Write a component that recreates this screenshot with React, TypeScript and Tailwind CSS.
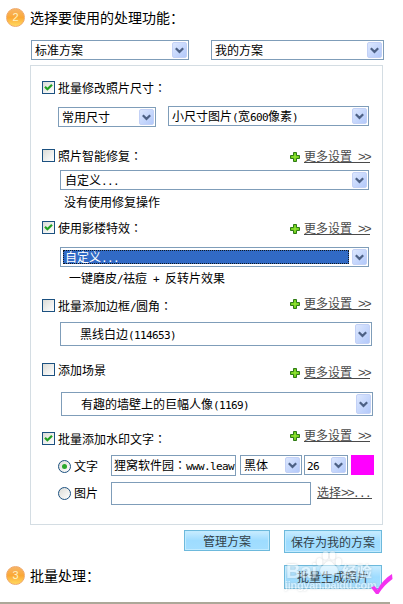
import React from 'react';
import clsx from 'clsx';

const Arrow: React.FC = () => (
  <span className="flex w-[15px] shrink-0 self-stretch items-center justify-center rounded-[2px] border border-[#c3d1f6] bg-linear-to-br from-[#dce7fe] to-[#b3c9fa]">
    <svg width="9" height="7" viewBox="0 0 9 7" fill="none" stroke="#4d6185" strokeWidth="2.2">
      <path d="M0.8 1.2 4.5 4.9 8.2 1.2" />
    </svg>
  </span>
);

const Select: React.FC<{ className?: string; children: React.ReactNode; focused?: boolean }> = ({
  className,
  children,
  focused,
}) => (
  <div className={clsx('flex shrink-0 items-center border border-[#7f9db9] bg-white p-px', className)}>
    {focused ? (
      <span className="mx-px mr-[3px] h-[14px] flex-1 border border-dotted border-[#101820] bg-[#316ac5] pl-px leading-[12px] text-white">
        {children}
      </span>
    ) : (
      <span className="h-[14px] flex-1 leading-[14px]">{children}</span>
    )}
    <Arrow />
  </div>
);

const Checkbox: React.FC<{ checked?: boolean }> = ({ checked }) => (
  <span className="flex h-[13px] w-[13px] shrink-0 items-center justify-center border border-[#1c5180] bg-linear-to-br from-[#dcdcd7] to-white">
    {checked && (
      <svg width="9" height="9" viewBox="0 0 9 9" fill="none" stroke="#21a121" strokeWidth="2.2">
        <path d="M1 3.8 3.4 6.3 8 1.7" />
      </svg>
    )}
  </span>
);

const Radio: React.FC<{ checked?: boolean }> = ({ checked }) => (
  <span className="flex h-[13px] w-[13px] shrink-0 items-center justify-center rounded-full border border-[#1c5180] bg-linear-to-br from-[#dcdcd7] to-white">
    {checked && <span className="h-[5px] w-[5px] rounded-full bg-[#2aa82a]" />}
  </span>
);

// ASCII characters take exactly half of a Chinese character
const Half: React.FC<{ children: React.ReactNode }> = ({ children }) => (
  <span className="font-['DejaVu_Sans_Mono',monospace] text-[11px] leading-none tracking-[-0.62px] whitespace-pre">
    {children}
  </span>
);

// centred full-width colon
const Colon: React.FC = () => <span className="font-['Noto_Sans_CJK_TC',sans-serif]">：</span>;

const Chevrons: React.FC = () => (
  <span className="font-['Liberation_Sans',sans-serif] text-[13px] leading-none tracking-[-1.6px]">&gt;&gt;</span>
);

const More: React.FC<{ className?: string }> = ({ className }) => (
  <div className={clsx('ml-auto flex shrink-0 text-[#4a4a4a]', className)}>
    <svg className="mt-[3px] mr-[4px]" width="10" height="10" viewBox="0 0 10 10">
      <path d="M3.5 0.5h3v3h3v3h-3v3h-3v-3h-3v-3h3z" fill="#5fc410" stroke="#2f7a16" />
      <path d="M5 1.5v7M1.5 5h7" stroke="#a0ea3c" strokeWidth="1" />
    </svg>
    <span className="flex h-[14px] w-[66px] items-baseline justify-between border-b border-[#4a4a4a] leading-[13px]">
      更多设置
      <Chevrons />
    </span>
  </div>
);

const Option: React.FC<{ checked?: boolean; label: React.ReactNode; className: string; more?: string }> = ({
  checked,
  label,
  className,
  more,
}) => (
  <div className={clsx('flex h-[13px] shrink-0 items-start', className)}>
    <Checkbox checked={checked} />
    <span className="ml-[3px] h-[14px] leading-[14px]">{label}</span>
    {more !== undefined && <More className={more} />}
  </div>
);

const Step: React.FC<{ n: number; children: React.ReactNode }> = ({ n, children }) => (
  <div className="flex h-[20px] items-center">
    <span className="flex h-[19px] w-[19px] items-center justify-center rounded-full border border-[#f0a868] bg-linear-to-b from-[#f7b564] via-[#fba834] to-[#ffd95e] font-['Liberation_Sans',sans-serif] text-[11px] text-[#fff3c4]">
      {n}
    </span>
    <span className="ml-[5px] text-[14px] leading-[20px]">{children}</span>
  </div>
);

const Button: React.FC<{ className: string; children: React.ReactNode }> = ({ className, children }) => (
  <div
    className={clsx(
      'flex shrink-0 items-center justify-center border border-[#6db9dc] bg-linear-to-b from-[#c9ecff] via-[#9edcff] to-[#a3deff] text-[#333f48] shadow-[inset_0_0_0_1px_#c2ebff]',
      className,
    )}
  >
    {children}
  </div>
);

const Watermark: React.FC = () => (
  <div className="absolute top-[-14px] left-0 h-[44px] w-[100px] text-white opacity-50 drop-shadow-[0_0_1px_#9aa4aa]">
    <span className="absolute top-[10px] left-[2px] font-['Liberation_Sans',sans-serif] text-[20px] leading-[20px] font-bold">
      Bai
    </span>
    <svg className="absolute top-0 left-[32px]" width="26" height="25" viewBox="0 0 26 25" fill="currentColor">
      <ellipse cx="3.5" cy="11" rx="3" ry="4" />
      <ellipse cx="9.5" cy="4.5" rx="3" ry="4.2" />
      <ellipse cx="16.5" cy="4.5" rx="3" ry="4.2" />
      <ellipse cx="22.5" cy="11" rx="3" ry="4" />
      <path d="M13 10c3 0 4.500 3.500 7 5.500 3.500 3 2 9-3 8.500-2.500-.5-5.500-.5-8 0-5 .5-6.500-5.500-3-8.500 2.500-2 4-5.500 7-5.500z" />
    </svg>
    <span className="absolute top-[11px] left-[58px] text-[15px] leading-[18px] font-bold">经验</span>
    <span className="absolute top-[28px] left-[1px] font-['Liberation_Sans',sans-serif] text-[11px] leading-[12px] font-bold tracking-[-0.3px]">
      jingyan.baidu.com
    </span>
  </div>
);

const App: React.FC = () => {
  return (
    <div className="flex h-[604px] w-[403px] flex-col overflow-hidden bg-white font-['Noto_Sans_CJK_SC',sans-serif] text-[12px] whitespace-nowrap text-black">
      <div className="mt-[7px] pl-[6px]">
        <Step n={2}>选择要使用的处理功能：</Step>
      </div>

      <div className="mt-[13px] flex gap-[22px] pl-[31px]">
        <Select className="h-[20px] w-[158px] pl-[3px]">标准方案</Select>
        <Select className="h-[20px] w-[173px] pl-[3px]">我的方案</Select>
      </div>

      <div className="mt-[5px] ml-[30px] flex h-[460px] w-[353px] shrink-0 flex-col border border-[#d4dde3] pr-[12px] pl-[11px]">
        <Option checked className="mt-[15px]" label={<>批量修改照片尺寸<Colon /></>} />
        <div className="mt-[12px] flex gap-[12px] pl-[16px]">
          <Select className="mt-px h-[20px] w-[98px] pl-[3px]">常用尺寸</Select>
          <Select className="h-[20px] w-[201px] pl-[3px]">
            小尺寸图片<Half>(</Half>宽<Half>600</Half>像素<Half>)</Half>
          </Select>
        </div>

        <Option className="mt-[22px]" more="" label={<>照片智能修复<Colon /></>} />
        <Select className="mt-[8px] ml-[18px] h-[20px] w-[309px] pl-[4px]">
          自定义<Half>...</Half>
        </Select>
        <div className="mt-[5px] ml-[22px] h-[14px] leading-[14px]">没有使用修复操作</div>

        <Option checked className="mt-[12px]" more="" label={<>使用影楼特效<Colon /></>} />
        <Select focused className="mt-[13px] ml-[18px] h-[20px] w-[309px]">
          自定义<Half>...</Half>
        </Select>
        <div className="mt-[4px] ml-[27px] h-[14px] leading-[14px]">
          一键磨皮<Half>/</Half>祛痘<Half> + </Half>反转片效果
        </div>

        <Option className="mt-[14px]" more="mt-[-3px]" label={<>批量添加边框<Half>/</Half>圆角<Colon /></>} />
        <Select className="mt-[10px] ml-[18px] h-[24px] w-[312px] pl-[19px]">
          黑线白边<Half>(114653)</Half>
        </Select>

        <Option className="mt-[17px]" more="mt-[2px]" label="添加场景" />
        <Select className="mt-[16px] ml-[19px] h-[24px] w-[312px] pl-[19px]">
          有趣的墙壁上的巨幅人像<Half>(1169)</Half>
        </Select>

        <Option checked className="mt-[16px]" more="mt-[-4px]" label={<>批量添加水印文字<Colon /></>} />
        <div className="mt-[10px] flex h-[21px] shrink-0 items-start pl-[16px]">
          <div className="mt-[4px] flex w-[53px] shrink-0 items-center gap-[3px]">
            <Radio checked />
            <span className="leading-[14px]">文字</span>
          </div>
          <div className="h-[21px] w-[125px] shrink-0 overflow-hidden border border-[#7f9db9] pl-[2px] leading-[17px]">
            狸窝软件园<Colon /><Half>www.leaw</Half>
          </div>
          <Select className="ml-[4px] h-[20px] w-[62px] pl-[3px]">黑体</Select>
          <Select className="ml-[2px] h-[20px] w-[44px] pl-[2px]"><Half>26</Half></Select>
          <span className="ml-[3px] h-[20px] w-[23px] shrink-0 bg-[#ff00ff]" />
        </div>
        <div className="mt-[6px] flex h-[23px] shrink-0 items-start pl-[16px]">
          <div className="mt-[4px] flex w-[53px] shrink-0 items-center gap-[3px]">
            <Radio />
            <span className="leading-[14px]">图片</span>
          </div>
          <div className="h-[23px] w-[200px] shrink-0 border border-[#7f9db9]" />
          <span className="mt-[3px] ml-[6px] flex h-[14px] w-[55px] shrink-0 items-baseline border-b border-[#4a4a4a] leading-[13px] text-[#4a4a4a]">
            选择<Chevrons /><Half>...</Half>
          </span>
        </div>
      </div>

      <div className="mt-[5px] flex items-start gap-[14px] pl-[184px]">
        <Button className="h-[21px] w-[86px]">管理方案</Button>
        <Button className="h-[23px] w-[98px]">保存为我的方案</Button>
      </div>

      <div className="mt-[12px] flex items-start pl-[6px]">
        <div className="w-[278px]">
          <Step n={3}>批量处理：</Step>
        </div>
        <div className="relative">
          <Button className="h-[24px] w-[98px]">批量生成照片</Button>
          <Watermark />
          <svg className="absolute top-[9px] left-[87px]" width="22" height="21" viewBox="0 0 22 21">
            <path d="M0 13.500 3.500 12 6.500 15.500C10 9 15 3.500 21 0L21.500 5C16 9 11 14 7.500 20H5z" fill="#f432f0" />
          </svg>
        </div>
      </div>
      <div className="mt-auto h-[2px] w-[390px] bg-[#aca899]" />
    </div>
  );
};

export default App;
